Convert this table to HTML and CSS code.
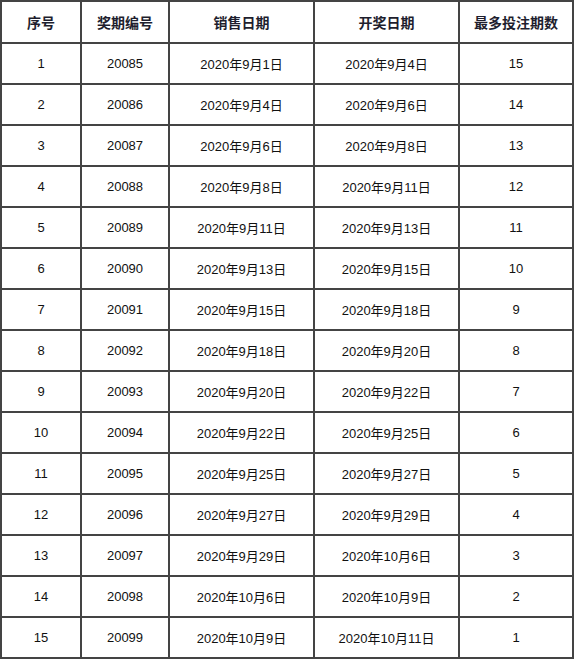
FILE: index.html
```html
<!DOCTYPE html>
<html lang="zh">
<head>
<meta charset="utf-8">
<title>开奖时间表</title>
<link rel="stylesheet" href="styles.css">
</head>
<body>
<table class="schedule">
  <colgroup>
    <col class="c1"><col class="c2"><col class="c3"><col class="c4"><col class="c5">
  </colgroup>
  <thead>
    <tr><th>序号</th><th>奖期编号</th><th>销售日期</th><th>开奖日期</th><th>最多投注期数</th></tr>
  </thead>
  <tbody>
    <tr><td>1</td><td>20085</td><td>2020年9月1日</td><td>2020年9月4日</td><td>15</td></tr>
    <tr><td>2</td><td>20086</td><td>2020年9月4日</td><td>2020年9月6日</td><td>14</td></tr>
    <tr><td>3</td><td>20087</td><td>2020年9月6日</td><td>2020年9月8日</td><td>13</td></tr>
    <tr><td>4</td><td>20088</td><td>2020年9月8日</td><td>2020年9月11日</td><td>12</td></tr>
    <tr><td>5</td><td>20089</td><td>2020年9月11日</td><td>2020年9月13日</td><td>11</td></tr>
    <tr><td>6</td><td>20090</td><td>2020年9月13日</td><td>2020年9月15日</td><td>10</td></tr>
    <tr><td>7</td><td>20091</td><td>2020年9月15日</td><td>2020年9月18日</td><td>9</td></tr>
    <tr><td>8</td><td>20092</td><td>2020年9月18日</td><td>2020年9月20日</td><td>8</td></tr>
    <tr><td>9</td><td>20093</td><td>2020年9月20日</td><td>2020年9月22日</td><td>7</td></tr>
    <tr><td>10</td><td>20094</td><td>2020年9月22日</td><td>2020年9月25日</td><td>6</td></tr>
    <tr><td>11</td><td>20095</td><td>2020年9月25日</td><td>2020年9月27日</td><td>5</td></tr>
    <tr><td>12</td><td>20096</td><td>2020年9月27日</td><td>2020年9月29日</td><td>4</td></tr>
    <tr><td>13</td><td>20097</td><td>2020年9月29日</td><td>2020年10月6日</td><td>3</td></tr>
    <tr><td>14</td><td>20098</td><td>2020年10月6日</td><td>2020年10月9日</td><td>2</td></tr>
    <tr><td>15</td><td>20099</td><td>2020年10月9日</td><td>2020年10月11日</td><td>1</td></tr>
  </tbody>
</table>
</body>
</html>
```
FILE: styles.css
```css
html, body {
  margin: 0;
  padding: 0;
  background: #fff;
}
.schedule {
  width: 574px;
  table-layout: fixed;
  border-collapse: separate;
  border-spacing: 0;
  border: 1px solid #444;
  font-family: "Liberation Sans", "Noto Sans CJK SC", sans-serif;
  font-size: 13px;
  color: #111;
}
.c1 { width: 80px; }
.c2 { width: 88px; }
.c3 { width: 145px; }
.c4 { width: 145px; }
.c5 { width: 114px; }
.schedule th,
.schedule td {
  border: 1px solid #444;
  padding: 0;
  text-align: center;
  vertical-align: middle;
}
.schedule th {
  height: 40px;
  font-family: "Noto Sans CJK SC", sans-serif;
  font-size: 14px;
  font-weight: bold;
  color: #1e1e2e;
}
.schedule td {
  height: 39px;
}
```
